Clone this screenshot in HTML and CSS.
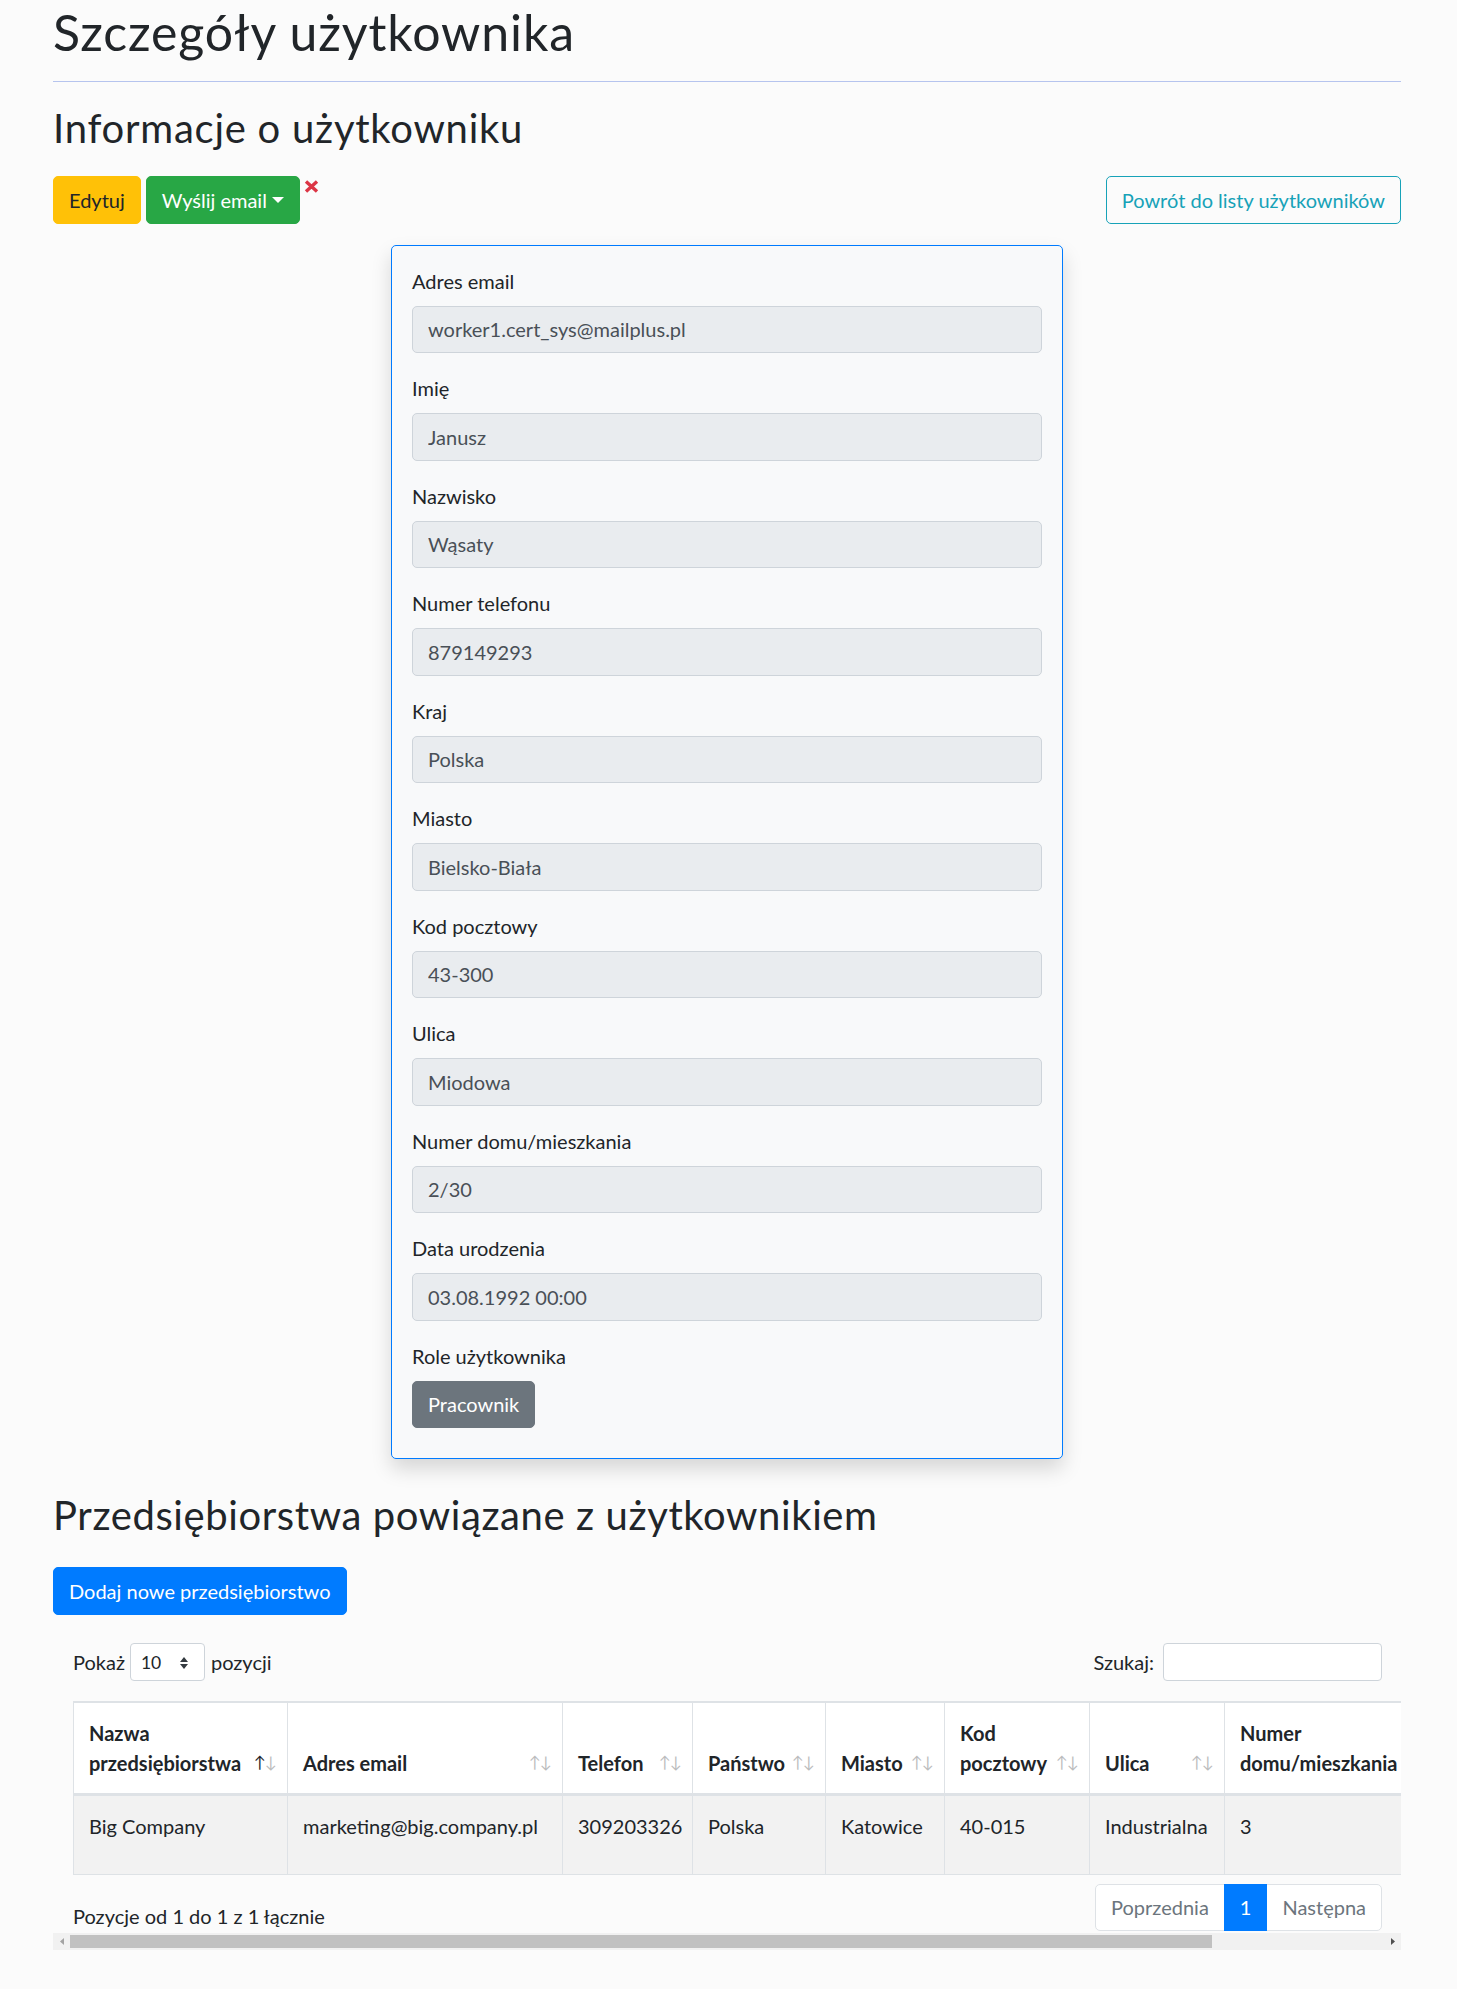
FILE: index.html
```html
<!DOCTYPE html>
<html lang="pl">
<head>
<meta charset="utf-8">
<title>Szczegóły użytkownika</title>
<link rel="stylesheet" href="styles.css">
</head>
<body>
<main class="page">
  <h1 class="page-title">Szczegóły użytkownika</h1>
  <hr class="divider">
  <h2 class="section-title">Informacje o użytkowniku</h2>

  <div class="toolbar">
    <div class="toolbar-left">
      <a class="btn btn-warning">Edytuj</a>
      <a class="btn btn-success dropdown-toggle">Wyślij email</a>
      <span class="remove-icon" title="Usuń">
        <svg width="15" height="13" viewBox="0 0 15 13"><path d="M2 1.5 L13 11.5 M13 1.5 L2 11.5" stroke="#dc3545" stroke-width="3.4" stroke-linecap="butt" fill="none"/></svg>
      </span>
    </div>
    <a class="btn btn-outline-info">Powrót do listy użytkowników</a>
  </div>

  <section class="card">
    <div class="form-group"><label>Adres email</label><input class="form-control" readonly value="worker1.cert_sys@mailplus.pl"></div>
    <div class="form-group"><label>Imię</label><input class="form-control" readonly value="Janusz"></div>
    <div class="form-group"><label>Nazwisko</label><input class="form-control" readonly value="Wąsaty"></div>
    <div class="form-group"><label>Numer telefonu</label><input class="form-control" readonly value="879149293"></div>
    <div class="form-group"><label>Kraj</label><input class="form-control" readonly value="Polska"></div>
    <div class="form-group"><label>Miasto</label><input class="form-control" readonly value="Bielsko-Biała"></div>
    <div class="form-group"><label>Kod pocztowy</label><input class="form-control" readonly value="43-300"></div>
    <div class="form-group"><label>Ulica</label><input class="form-control" readonly value="Miodowa"></div>
    <div class="form-group"><label>Numer domu/mieszkania</label><input class="form-control" readonly value="2/30"></div>
    <div class="form-group"><label>Data urodzenia</label><input class="form-control" readonly value="03.08.1992 00:00"></div>
    <div class="form-group roles-group"><label>Role użytkownika</label><div class="roles"><span class="btn btn-secondary">Pracownik</span></div></div>
  </section>

  <h2 class="section-title companies-title">Przedsiębiorstwa powiązane z użytkownikiem</h2>
  <div class="add-row"><a class="btn btn-primary">Dodaj nowe przedsiębiorstwo</a></div>

  <div class="dt-wrapper">
    <div class="dt-scroll">
      <div class="dt-top">
        <label class="dt-length">Pokaż <span class="select-sm"><span>10</span><svg width="10" height="14" viewBox="0 0 10 14"><path d="M5 1 L9 6 L1 6 Z M1 8 L9 8 L5 13 Z" fill="#343a40"/></svg></span> pozycji</label>
        <label class="dt-filter">Szukaj:<input class="search-input" type="search"></label>
      </div>
      <table class="dt-table">
        <colgroup>
          <col class="w-name"><col class="w-email"><col class="w-phone"><col class="w-country"><col class="w-city"><col class="w-zip"><col class="w-street"><col class="w-house"><col class="w-actions">
        </colgroup>
        <thead>
          <tr>
            <th class="sorting sorting-asc">Nazwa przedsiębiorstwa</th>
            <th class="sorting">Adres email</th>
            <th class="sorting">Telefon</th>
            <th class="sorting">Państwo</th>
            <th class="sorting">Miasto</th>
            <th class="sorting">Kod pocztowy</th>
            <th class="sorting">Ulica</th>
            <th class="sorting">Numer domu/mieszkania</th>
            <th></th>
          </tr>
        </thead>
        <tbody>
          <tr class="odd">
            <td>Big Company</td>
            <td>marketing@big.company.pl</td>
            <td>309203326</td>
            <td>Polska</td>
            <td>Katowice</td>
            <td>40-015</td>
            <td>Industrialna</td>
            <td>3</td>
            <td></td>
          </tr>
        </tbody>
      </table>
      <div class="dt-bottom">
        <div class="dt-info">Pozycje od 1 do 1 z 1 łącznie</div>
        <ul class="pagination">
          <li class="page-item disabled"><a class="page-link">Poprzednia</a></li>
          <li class="page-item active"><a class="page-link">1</a></li>
          <li class="page-item disabled"><a class="page-link">Następna</a></li>
        </ul>
      </div>
    </div>
    <div class="scrollbar">
      <span class="sb-btn sb-left"><svg width="4" height="7" viewBox="0 0 4 7"><path d="M4 0 L0 3.5 L4 7 Z" fill="#a3a3a3"/></svg></span>
      <span class="sb-track"><span class="sb-thumb"></span></span>
      <span class="sb-btn sb-right"><svg width="4" height="7" viewBox="0 0 4 7"><path d="M0 0 L4 3.5 L0 7 Z" fill="#505050"/></svg></span>
    </div>
  </div>
</main>
</body>
</html>
```

FILE: styles.css
```css
* { box-sizing: border-box; }

html, body { margin: 0; padding: 0; }

body {
  background: #fbfbfb;
  color: #212529;
  font-family: "Segoe UI", Lato, "Open Sans", "Liberation Sans", sans-serif;
  font-size: 20px;
  line-height: 1.5;
}

.page {
  padding: 0 56px 36px 53px;
}

.page-title {
  margin: 0;
  padding-top: 2px;
  font-size: 50px;
  font-weight: 400;
  line-height: 60px;
  letter-spacing: 0.9px;
}

.divider {
  margin: 19px 0 0;
  height: 0;
  border: 0;
  border-top: 1px solid #b6c4ee;
}

.section-title {
  margin: 20px 0 24px;
  padding-top: 2px;
  font-size: 40px;
  font-weight: 400;
  line-height: 48px;
  letter-spacing: 0.75px;
}

.toolbar {
  display: flex;
  justify-content: space-between;
  align-items: flex-start;
  margin-bottom: 21px;
}

.toolbar-left {
  display: flex;
  align-items: flex-start;
  gap: 5px;
}

.btn {
  display: inline-block;
  font-size: 20px;
  line-height: 30px;
  padding: 7.75px 15px;
  border: 1px solid transparent;
  border-radius: 5px;
  font-weight: 400;
  text-decoration: none;
  white-space: nowrap;
  cursor: pointer;
}

.btn-warning { background: #ffc107; border-color: #ffc107; color: #212529; }
.btn-success { background: #28a745; border-color: #28a745; color: #fff; }
.btn-secondary { background: #6c757d; border-color: #6c757d; color: #fff; }
.btn-primary { background: #007bff; border-color: #007bff; color: #fff; }
.btn-outline-info { background: transparent; border-color: #17a2b8; color: #17a2b8; }

.dropdown-toggle::after {
  content: "";
  display: inline-block;
  margin-left: 5px;
  vertical-align: 5px;
  border-top: 6px solid #fff;
  border-left: 6px solid transparent;
  border-right: 6px solid transparent;
}

.remove-icon {
  display: inline-flex;
  margin-top: 4px;
  margin-left: -1px;
}

.card {
  width: 672px;
  margin: 0 auto;
  padding: 20px;
  background: #f8f9fa;
  border: 1px solid #007bff;
  border-radius: 5px;
  box-shadow: 0 10px 20px rgba(0, 0, 0, 0.15);
}

.form-group {
  margin-bottom: 20px;
}

.form-group label {
  display: block;
  margin-bottom: 10px;
  line-height: 30px;
}

.form-control {
  display: block;
  width: 100%;
  height: 47.5px;
  padding: 7.5px 15px;
  font-family: inherit;
  font-size: 20px;
  line-height: 30px;
  color: #495057;
  background: #e9ecef;
  border: 1px solid #ced4da;
  border-radius: 5px;
  outline: none;
}

.roles-group { margin-bottom: 10px; }

.companies-title {
  margin: 30px 0 28px;
  letter-spacing: 0.6px;
}

.add-row { display: flex; }

.dt-wrapper {
  margin-top: 28px;
}

.dt-scroll {
  overflow: hidden;
  padding: 0 19px 2px 20px;
}

.dt-top {
  display: flex;
  justify-content: space-between;
  align-items: center;
  height: 38px;
}

.dt-length, .dt-filter {
  display: flex;
  align-items: center;
  font-weight: 400;
  white-space: nowrap;
}

.select-sm {
  display: inline-flex;
  align-items: center;
  justify-content: space-between;
  width: 75px;
  height: 38px;
  margin: 0 6px 0 5px;
  padding: 3px 15px 0 10px;
  font-size: 17.5px;
  background: #fff;
  border: 1px solid #ced4da;
  border-radius: 4px;
}

.search-input {
  width: 219px;
  height: 38px;
  margin-left: 9px;
  background: #fff;
  border: 1px solid #ced4da;
  border-radius: 4px;
  font-family: inherit;
  font-size: 17.5px;
  outline: none;
}

.dt-table {
  margin-top: 20px;
  width: 1516px;
  table-layout: fixed;
  border-collapse: separate;
  border-spacing: 0;
  border: 1px solid #dee2e6;
  background: #fff;
}

.w-name { width: 214px; }
.w-email { width: 275px; }
.w-phone { width: 130px; }
.w-country { width: 133px; }
.w-city { width: 119px; }
.w-zip { width: 145px; }
.w-street { width: 135px; }
.w-house { width: 235px; }
.w-actions { width: 128px; }

.dt-table th {
  position: relative;
  padding: 15px 37px 15px 15px;
  text-align: left;
  vertical-align: bottom;
  font-weight: 700;
  line-height: 30px;
  border-top: 1px solid #dee2e6;
  border-right: 1px solid #dee2e6;
  border-bottom: 2px solid #dee2e6;
  white-space: normal;
}

.dt-table th:last-child, .dt-table td:last-child { border-right: 0; }

.dt-table th.sorting::before,
.dt-table th.sorting::after {
  position: absolute;
  bottom: 23px;
  font-size: 16px;
  font-weight: 400;
  line-height: 16px;
  color: #212529;
  opacity: 0.3;
}

.dt-table th.sorting::before { content: "\2191"; right: 21px; }
.dt-table th.sorting::after { content: "\2193"; right: 10px; }
.dt-table th.sorting-asc::before { opacity: 1; }

.dt-table tbody tr { height: 79px; }

.dt-table td {
  padding: 15px;
  vertical-align: top;
  line-height: 30px;
  border-top: 1px solid #dee2e6;
  border-right: 1px solid #dee2e6;
  white-space: nowrap;
  overflow: hidden;
}

.dt-table tr.odd td { background: #f2f2f2; }

.dt-bottom {
  display: flex;
  justify-content: space-between;
  align-items: flex-start;
  margin-top: 9px;
}

.dt-info {
  padding-top: 17px;
  line-height: 30px;
}

.pagination {
  display: flex;
  list-style: none;
  margin: 0;
  padding: 0;
}

.page-link {
  display: block;
  padding: 10px 15px;
  line-height: 25px;
  color: #6c757d;
  background: #fff;
  border: 1px solid #dee2e6;
  margin-left: -1px;
}

.page-item:first-child .page-link { margin-left: 0; border-radius: 5px 0 0 5px; }
.page-item:last-child .page-link { border-radius: 0 5px 5px 0; }
.page-item.active .page-link { background: #007bff; border-color: #007bff; color: #fff; position: relative; }

.scrollbar {
  display: flex;
  height: 17px;
  background: #f1f1f1;
}

.sb-btn {
  display: flex;
  align-items: center;
  justify-content: center;
  width: 17px;
  flex: none;
}

.sb-track {
  flex: 1;
  padding: 2px 0;
}

.sb-thumb {
  display: block;
  width: 1142px;
  height: 13px;
  background: #c1c1c1;
}
```
